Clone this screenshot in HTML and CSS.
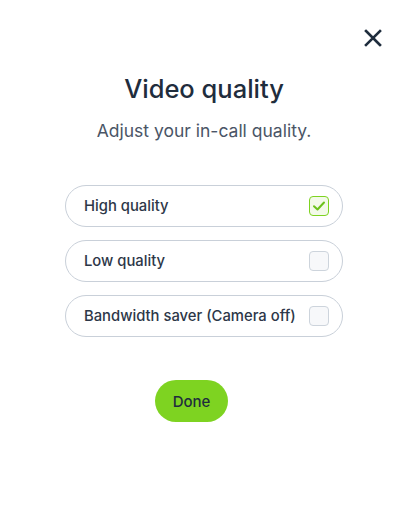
FILE: index.html
```html
<!DOCTYPE html>
<html lang="en">
<head>
<meta charset="UTF-8">
<meta name="viewport" content="width=device-width, initial-scale=1.0">
<title>Video quality</title>
<link rel="stylesheet" href="styles.css">
</head>
<body>
<div class="modal">
    <div class="modal-top">
        <button class="close-btn" aria-label="Close">
            <svg width="20" height="20" viewBox="0 0 20 20"><path d="M3 3 L17 17 M17 3 L3 17" stroke="#1f2d3d" stroke-width="2.6" stroke-linecap="square"/></svg>
        </button>
    </div>
    <h2 class="title">Video quality</h2>
    <p class="subtitle">Adjust your in-call quality.</p>
    <div class="options">
        <label class="option">
            <span>High quality</span>
            <span class="box checked">
                <svg width="14" height="14" viewBox="0 0 14 14"><path d="M2 7.2 L5.5 10.5 L12 3.5" fill="none" stroke="#6cc21b" stroke-width="2" stroke-linecap="round" stroke-linejoin="round"/></svg>
            </span>
        </label>
        <label class="option">
            <span>Low quality</span>
            <span class="box"></span>
        </label>
        <label class="option">
            <span>Bandwidth saver (Camera off)</span>
            <span class="box"></span>
        </label>
    </div>
    <div class="actions">
        <button class="done-btn">Done</button>
    </div>
</div>
</body>
</html>
```

FILE: styles.css
```css
body {
    margin: 0;
    font-family: Inter, "Open Sans", sans-serif;
    background-color: #fff;
    color: #1f2d3d;
}
.modal {
    width: 405px;
    height: 512px;
    box-sizing: border-box;
    padding: 26px 22px 0 65px;
}
.modal-top {
    display: flex;
    justify-content: flex-end;
    height: 24px;
}
.close-btn {
    background: none;
    border: none;
    padding: 0;
    width: 20px;
    height: 20px;
    margin-top: 2px;
    cursor: pointer;
}
.title {
    width: 278px;
    margin: 24px 0 0;
    text-align: center;
    font-size: 25.5px;
    font-weight: 500;
    line-height: 30px;
    color: #1f2d3d;
}
.subtitle {
    width: 278px;
    margin: 16px 0 0;
    text-align: center;
    font-size: 17.5px;
    line-height: 22px;
    color: #4a5566;
}
.options {
    width: 278px;
    margin-top: 43px;
    display: flex;
    flex-direction: column;
    gap: 13px;
}
.option {
    height: 42px;
    box-sizing: border-box;
    border: 1px solid #c9d0d9;
    border-radius: 21px;
    display: flex;
    align-items: center;
    justify-content: space-between;
    padding: 0 13px 0 18px;
    font-size: 14.8px;
    font-weight: 500;
    color: #2d3748;
}
.box {
    width: 20px;
    height: 20px;
    box-sizing: border-box;
    border: 1px solid #cdd4dc;
    border-radius: 4px;
    background-color: #f7f8fa;
    display: flex;
    align-items: center;
    justify-content: center;
}
.box.checked {
    border: 1.5px solid #7ed321;
    background-color: #f3fae9;
}
.actions {
    width: 278px;
    display: flex;
    justify-content: center;
    margin-top: 43px;
}
.done-btn {
    width: 73px;
    height: 42px;
    margin-left: -25px;
    border: none;
    border-radius: 21px;
    background-color: #7ed321;
    color: #1f2d3d;
    font-family: Inter, "Open Sans", sans-serif;
    font-size: 15px;
    font-weight: 500;
    cursor: pointer;
}
```
